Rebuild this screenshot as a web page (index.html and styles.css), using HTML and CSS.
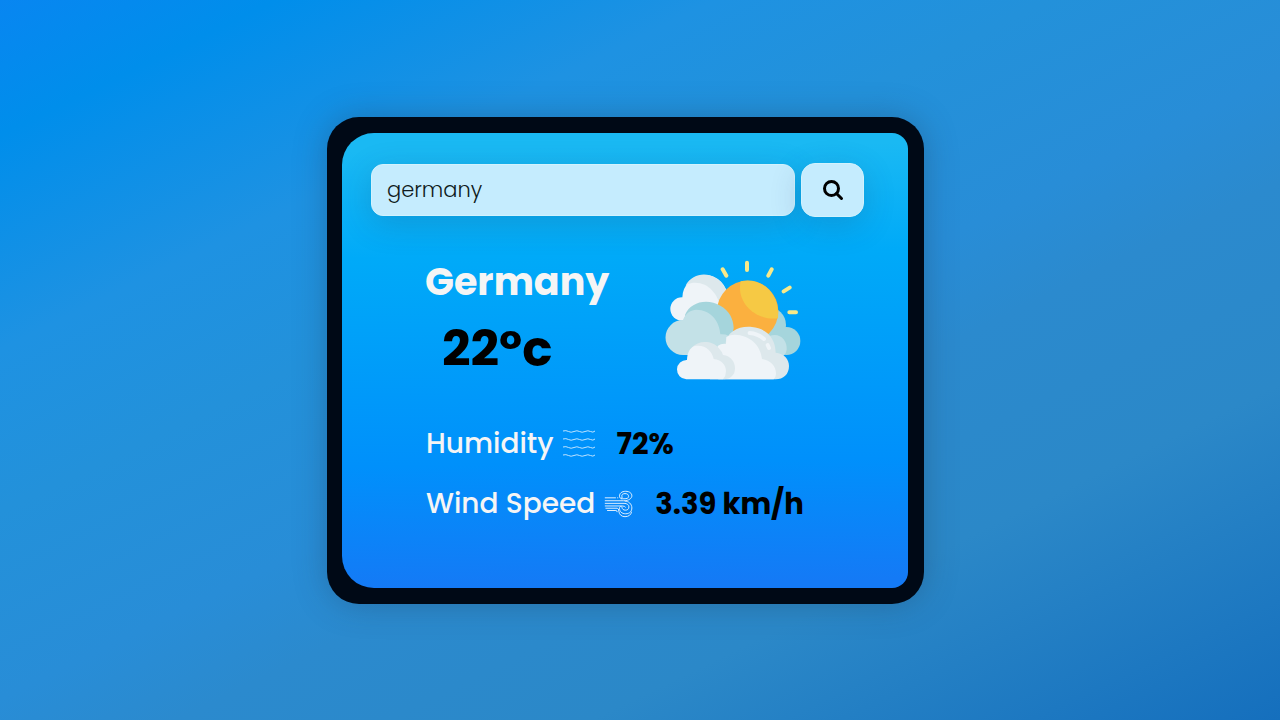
FILE: index.html
```html
<!DOCTYPE html>
<html lang="en">
<head>
<meta charset="utf-8">
<meta name="viewport" content="width=device-width, initial-scale=1">
<title>Weather</title>
<link rel="stylesheet" href="styles.css">
</head>
<body>
<main class="card">
  <div class="screen">
    <form class="search">
      <input class="search-input" type="text" value="germany" aria-label="City or country">
      <button class="search-button" type="button" aria-label="Search">
        <svg class="search-icon" viewBox="0 0 22 22" aria-hidden="true">
          <circle cx="9.500" cy="9.500" r="7"/>
          <path d="M14.500 14.500l5 5"/>
        </svg>
      </button>
    </form>
    <section class="current">
      <div class="summary">
        <h1 class="place">Germany</h1>
        <p class="temperature">22°c</p>
      </div>
      <svg class="weather-icon" viewBox="45 25 408 360" role="img" aria-label="Partly cloudy">
        <g fill="#eff4f8">
          <circle cx="96" cy="172" r="35"/>
          <circle cx="165" cy="138" r="68"/>
        </g>
        <path fill="#dde8ec" d="M107 101C126 67 166 60 196 78C222 93 234 118 233 145L212 166C202 126 174 88 125 94Q114 96 107 101Z"/>
        <g fill="#a5d5dc">
          <circle cx="354" cy="220" r="54"/>
          <circle cx="409" cy="268" r="42"/>
        </g>
        <path fill="#c3e1e7" d="M360 252C390 242 413 266 410 294Q409 306 401 312L350 312Z"/>
        <circle cx="293" cy="179" r="92" fill="#fbb03f"/>
        <path fill="#f6c944" d="M272 89C334 75 390 125 384 200C318 208 258 154 272 89Z"/>
        <path fill="#a5d5dc" d="M105 190C120 151 172 139 211 162C239 178 250 202 251 229L235 315H205L108 210Z"/>
        <path fill="#c3e1e7" d="M99 205C107 183 123 175 139 174C181 174 209 208 211 248Q226 247 235 252L228 310H99A52 52 0 1 1 99 205Z"/>
        <path fill="#dde8ec" d="M226 277C230 240 267 222 306 226C350 230 377 261 377 303C402 305 417 322 417 343C417 368 400 383 377 383H220V280Z"/>
        <path fill="#eff4f8" d="M203 283Q215 275 228 277L229 256Q240 249 254 249C299 250 332 280 336 322C363 326 379 345 378 367Q377 378 371 383H205Z"/>
        <path fill="#dde8ec" d="M125 288C145 265 187 266 206 289Q217 301 219 310C243 313 255 331 255 350C255 369 243 383 220 383H180Z"/>
        <path fill="#eff4f8" d="M111 325C112 304 119 288 134 283C164 277 187 297 191 322C214 324 228 339 228 359Q228 373 219 383H109A29 29 0 1 1 111 325Z"/>
        <g class="glow"><path d="M299 244Q324 246 342 262M353 280L357 289"/></g>
        <g class="rays"><path d="M291 33V55M218 53L229 72M365 53L355 72M401 119L419 108M418 182H438"/></g>
      </svg>
    </section>
    <dl class="details">
      <div class="detail">
        <dt class="label">Humidity
          <svg class="humidity-icon" viewBox="0 0 32 28" aria-hidden="true">
            <path d="M0 1q3-1 5.500 .5t5.500 0t5.500 0t5.500 0t5.500 0t4.500-.5M0 9q3-1 5.500 .5t5.500 0t5.500 0t5.500 0t5.500 0t4.500-.5M0 17q3-1 5.500 .5t5.500 0t5.500 0t5.500 0t5.500 0t4.500-.5M0 25q3-1 5.500 .5t5.500 0t5.500 0t5.500 0t5.500 0t4.500-.5"/>
          </svg>
        </dt>
        <dd class="value">72%</dd>
      </div>
      <div class="detail">
        <dt class="label">Wind Speed
          <svg class="wind-icon" viewBox="44 39 88 86" aria-hidden="true">
            <path d="M46 63H80M84 63H87M46 72H103C121 72 129 64 129 57C129 49 122 43 110 43C98 43 91 49 91 58M91 58C91 63 95 67 99 63C100 61 98 59 98 57C98 52 103 50 108 50C116 50 119 54 119 59C119 64 114 66 105 66H95"/>
            <path d="M46 80H105C115 80 120 85 120 91C120 98 115 101 109 101C103 101 99 97 99 93C97 87 91 89 91 95C91 105 98 112 110 112C123 112 129 104 129 94C129 82 119 73 107 73"/>
            <path d="M46 88H99Q109 88 110 93M48 95H84Q89 95 89 104C90 115 98 121 108 121C119 121 127 115 128 106M53 102H80Q84 102 84 107"/>
          </svg>
        </dt>
        <dd class="value">3.39 km/h</dd>
      </div>
    </dl>
  </div>
</main>
</body>
</html>
```
FILE: styles.css
```css
* {
  box-sizing: border-box;
  margin: 0;
}

body {
  min-height: 100vh;
  display: flex;
  align-items: center;
  justify-content: center;
  padding: 16px 29px 16px 0;
  font-family: Poppins, Inter, "Open Sans", sans-serif;
  background: linear-gradient(154deg, #0886f1 0%, #008eeb 10%, #1e92e2 26%, #2391da 38%, #288dd7 52%, #2b8ace 60%, #2b88c8 75%, #156fbd 100%);
}

.card {
  width: 100%;
  max-width: 597px;
  padding: 16px 16px 16px 15px;
  border-radius: 32px;
  background: #000916;
  box-shadow: 0 0 32px rgba(32, 60, 90, 0.35);
}

.screen {
  padding: 30px 44px 64px 29px;
  border-radius: 32px 16px 16px 32px;
  background: linear-gradient(179deg, #1ab9f3 4%, #00aaf8 27%, #0090fb 72%, #147af6 98%);
}

.search {
  display: flex;
  align-items: center;
  gap: 6px;
}

.search-input,
.search-button {
  border: 1px solid #d2f2fd;
  background: #c5ecfe;
  font: inherit;
  box-shadow: 0 8px 32px rgba(31, 60, 100, 0.2);
}

.search-input {
  flex: 1;
  min-width: 0;
  height: 52px;
  padding: 0 15px;
  border-radius: 12px;
  font-size: 21px;
  font-weight: 300;
  color: #101b20;
}

.search-button {
  display: grid;
  place-items: center;
  width: 63px;
  height: 54px;
  padding: 0;
  border-radius: 14px;
}

.search-icon {
  width: 22px;
  height: 22px;
  fill: none;
  stroke: #000;
  stroke-width: 3;
  stroke-linecap: round;
}

.current {
  display: flex;
  justify-content: space-between;
  align-items: center;
  padding: 40px 63px 0 54px;
}

.place {
  color: #f5f5f5;
  font-size: 38px;
  line-height: 50px;
  font-weight: 700;
}

.temperature {
  padding: 8px 0 0 17px;
  font-size: 50px;
  line-height: 68px;
  font-weight: 700;
}

.weather-icon {
  width: 136px;
  height: 120px;
}

.rays,
.glow {
  fill: none;
  stroke: #f8e989;
  stroke-width: 12;
  stroke-linecap: round;
}

.glow {
  stroke: #eff4f8;
}

.details {
  display: grid;
  gap: 20px;
  padding: 41px 0 0 55px;
}

.detail {
  display: flex;
  align-items: center;
  gap: 22px;
  font-size: 28px;
  line-height: 40px;
  white-space: nowrap;
}

.label {
  display: flex;
  align-items: center;
  gap: 9px;
  color: #f5f5f5;
  font-weight: 500;
}

.value {
  font-size: 29px;
  font-weight: 700;
}

.humidity-icon,
.wind-icon {
  width: 32px;
  height: 28px;
  fill: none;
  stroke: #bfe4ff;
  stroke-width: 1;
}

.wind-icon {
  width: 29px;
  stroke: #e0f1ff;
  stroke-width: 3;
}
```
